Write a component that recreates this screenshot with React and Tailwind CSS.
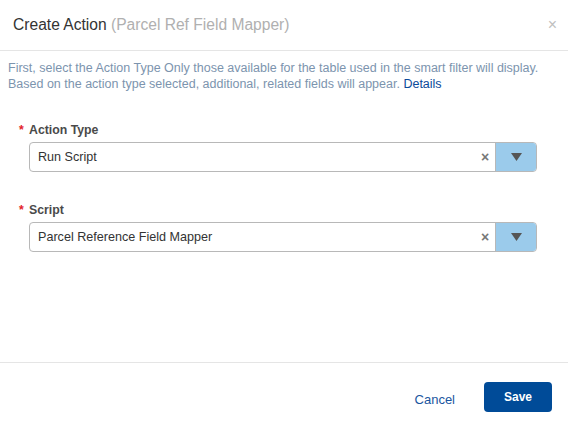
import React from 'react';

const Field = ({ label, value }) => (
  <div className="pl-[19px] pr-[31px]">
    <div className="flex items-center h-[16px] text-[12.3px] font-bold text-[#4a4a4a]">
      <span className="text-[#e3232c] w-[10px]">*</span>
      <span>{label}</span>
    </div>
    <div className="ml-[10px] mt-[4px] flex h-[30px] border border-[#b8b8b8] rounded-[4px] overflow-hidden">
      <div className="flex-1 flex items-center pl-[8px] text-[12.6px] text-[#333]">{value}</div>
      <div className="w-[16px] mr-[2px] flex items-center justify-center text-[14px] font-bold text-[#777]">×</div>
      <div className="w-[41px] bg-[#9bcbeb] border-l border-[#b8b8b8] flex items-center justify-center">
        <svg width="11" height="8" viewBox="0 0 11 8">
          <path d="M0 0 L11 0 L5.5 8 Z" fill="#555" />
        </svg>
      </div>
    </div>
  </div>
);

export default function App() {
  return (
    <div className="w-[568px] h-[425px] bg-white flex flex-col font-['Liberation_Sans',Arial,sans-serif]">
      {/* Header */}
      <div className="h-[51px] flex-shrink-0 border-b border-[#e5e5e5] flex items-center justify-between pl-[13px] pr-[11px]">
        <div className="text-[15.6px] text-[#333]">
          Create Action <span className="text-[#b0b0b0]">(Parcel Ref Field Mapper)</span>
        </div>
        <span className="text-[16px] text-[#c0c0c0]">×</span>
      </div>

      {/* Body */}
      <div className="flex-1 flex flex-col">
        <p className="pl-[8px] pt-[9px] text-[12.5px] leading-[16px] text-[#7c94ae]">
          First, select the Action Type Only those available for the table used in the smart filter will display.
          <br />
          Based on the action type selected, additional, related fields will appear.{' '}
          <span className="text-[#0b4a9a]">Details</span>
        </p>
        <div className="mt-[30px] flex flex-col gap-[30px]">
          <Field label="Action Type" value="Run Script" />
          <Field label="Script" value="Parcel Reference Field Mapper" />
        </div>
      </div>

      {/* Footer */}
      <div className="h-[63px] flex-shrink-0 border-t border-[#e5e5e5] flex items-start justify-end gap-[29px] pt-[19px] pr-[16px]">
        <button className="h-[30px] mt-[3px] text-[13px] text-[#1a56a0]">Cancel</button>
        <button className="w-[68px] h-[30px] rounded-[4px] bg-[#004b98] text-white text-[12px] font-bold">Save</button>
      </div>
    </div>
  );
}
